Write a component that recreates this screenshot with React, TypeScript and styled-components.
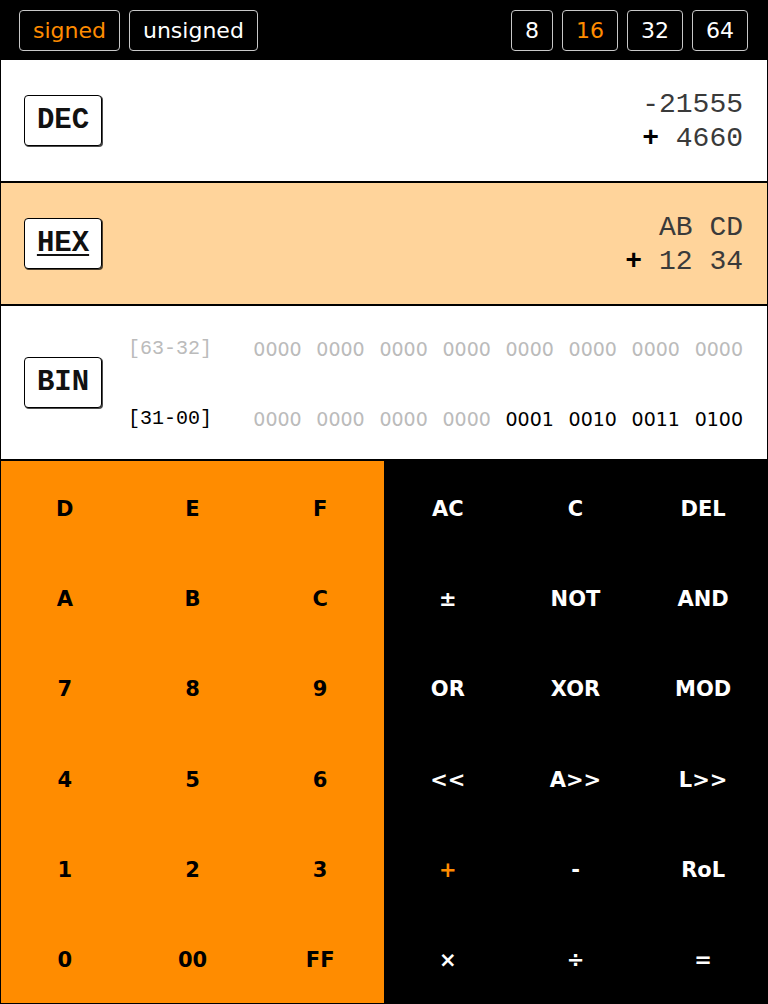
import React from "react";
import styled, { createGlobalStyle } from "styled-components";

const MONO = `"Courier New", Courier, "Nimbus Mono PS", "Nimbus Mono L", FreeMono, "Liberation Mono", monospace`;

const GlobalStyle = createGlobalStyle`
  html, body { margin: 0; padding: 0; background: #000; }
  body { font-family: "DejaVu Sans", Verdana, sans-serif; }
  * { box-sizing: border-box; }
`;

const Page = styled.div`
  width: 768px;
  height: 1004px;
  display: flex;
  flex-direction: column;
  background: #000;
`;

const TopBar = styled.div`
  height: 60px;
  flex: none;
  display: flex;
  align-items: center;
  justify-content: space-between;
  padding: 0 20px 0 19px;
  background: #000;
`;

const ToggleGroup = styled.div`
  display: flex;
  gap: 9px;
`;

const Toggle = styled.button<{ $active?: boolean }>`
  height: 41px;
  padding: 2px 13px 0;
  border: 1px solid #c8c8c8;
  border-radius: 4px;
  background: #000;
  color: ${(p) => (p.$active ? "#ff8c00" : "#fff")};
  font-family: "DejaVu Sans", Verdana, sans-serif;
  font-size: 22px;
  line-height: 36px;
  cursor: pointer;
`;

const Body = styled.div`
  flex: 1;
  display: flex;
  flex-direction: column;
  border: 1px solid #000;
  border-top: none;
  min-height: 0;
`;

const Row = styled.div<{ $bg: string; $h: number }>`
  height: ${(p) => p.$h}px;
  flex: none;
  display: flex;
  align-items: center;
  justify-content: space-between;
  padding: 0 24px 0 23px;
  background: ${(p) => p.$bg};
  border-bottom: 2px solid #000;
`;

const LabelBox = styled.button<{ $active?: boolean }>`
  width: 78px;
  height: 51px;
  flex: none;
  border: 1px solid #000;
  border-radius: 4px;
  background: #fff;
  box-shadow: 1px 1px 0 rgba(0, 0, 0, 0.7);
  font-family: ${MONO};
  font-weight: bold;
  font-size: 29px;
  color: #111;
  padding: 0;
  text-decoration: ${(p) => (p.$active ? "underline" : "none")};
  text-decoration-thickness: 2px;
  text-underline-offset: 3px;
`;

const Value = styled.div`
  text-align: right;
  font-family: ${MONO};
  font-size: 28px;
  line-height: 34px;
  color: #3a3a3a;
  white-space: pre;
  padding-top: 2px;
`;

const Sign = styled.span`
  font-weight: bold;
  color: #000;
`;

const BinArea = styled.div`
  flex: 1;
  margin-left: 26px;
  display: flex;
  flex-direction: column;
  gap: 46px;
  padding-top: 2px;
`;

const BinLine = styled.div`
  display: flex;
  align-items: center;
  justify-content: space-between;
  height: 24px;
`;

const Range = styled.span<{ $dim?: boolean }>`
  font-family: ${MONO};
  font-size: 20px;
  color: ${(p) => (p.$dim ? "#bbb" : "#000")};
`;

const Groups = styled.div`
  display: flex;
  gap: 14.7px;
`;

const Nibble = styled.span<{ $dim?: boolean }>`
  font-family: "DejaVu Sans", Verdana, sans-serif;
  font-size: 19px;
  color: ${(p) => (p.$dim ? "#bbb" : "#000")};
`;

const Keypad = styled.div`
  flex: 1;
  display: grid;
  grid-template-columns: 383px 1fr;
  min-height: 0;
`;

const KeyPanel = styled.div<{ $tone: "orange" | "dark" }>`
  display: grid;
  grid-template-columns: repeat(3, 1fr);
  grid-template-rows: repeat(6, 1fr);
  background: ${(p) => (p.$tone === "orange" ? "#ff8c00" : "#000")};
  color: ${(p) => (p.$tone === "orange" ? "#000" : "#fff")};
`;

const Key = styled.button<{ $hl?: boolean }>`
  border: none;
  background: transparent;
  color: ${(p) => (p.$hl ? "#ff8c00" : "inherit")};
  font-family: "DejaVu Sans", Verdana, sans-serif;
  font-weight: bold;
  font-size: 21px;
  padding: 5px 0 0;
  cursor: pointer;
`;

const hexKeys = ["D", "E", "F", "A", "B", "C", "7", "8", "9", "4", "5", "6", "1", "2", "3", "0", "00", "FF"];
const opKeys = ["AC", "C", "DEL", "±", "NOT", "AND", "OR", "XOR", "MOD", "<<", "A>>", "L>>", "+", "-", "RoL", "×", "÷", "="];

const hi = "0000 0000 0000 0000 0000 0000 0000 0000".split(" ");
const lo = "0000 0000 0000 0000 0001 0010 0011 0100".split(" ");

export default function App() {
  return (
    <Page>
      <GlobalStyle />
      <TopBar>
        <ToggleGroup>
          <Toggle $active>signed</Toggle>
          <Toggle>unsigned</Toggle>
        </ToggleGroup>
        <ToggleGroup>
          <Toggle>8</Toggle>
          <Toggle $active>16</Toggle>
          <Toggle>32</Toggle>
          <Toggle>64</Toggle>
        </ToggleGroup>
      </TopBar>
      <Body>
        <Row $bg="#fff" $h={123}>
          <LabelBox>DEC</LabelBox>
          <Value>
            {"-21555"}
            <br />
            <Sign>+</Sign>
            {" 4660"}
          </Value>
        </Row>
        <Row $bg="#ffd49b" $h={123}>
          <LabelBox $active>HEX</LabelBox>
          <Value>
            {"AB CD"}
            <br />
            <Sign>+</Sign>
            {" 12 34"}
          </Value>
        </Row>
        <Row $bg="#fff" $h={155}>
          <LabelBox>BIN</LabelBox>
          <BinArea>
            <BinLine>
              <Range $dim>[63-32]</Range>
              <Groups>
                {hi.map((g, i) => (
                  <Nibble key={i} $dim={g === "0000"}>{g}</Nibble>
                ))}
              </Groups>
            </BinLine>
            <BinLine>
              <Range>[31-00]</Range>
              <Groups>
                {lo.map((g, i) => (
                  <Nibble key={i} $dim={i < 4}>{g}</Nibble>
                ))}
              </Groups>
            </BinLine>
          </BinArea>
        </Row>
        <Keypad>
          <KeyPanel $tone="orange">
            {hexKeys.map((k) => (
              <Key key={k}>{k}</Key>
            ))}
          </KeyPanel>
          <KeyPanel $tone="dark">
            {opKeys.map((k) => (
              <Key key={k} $hl={k === "+"}>{k}</Key>
            ))}
          </KeyPanel>
        </Keypad>
      </Body>
    </Page>
  );
}
